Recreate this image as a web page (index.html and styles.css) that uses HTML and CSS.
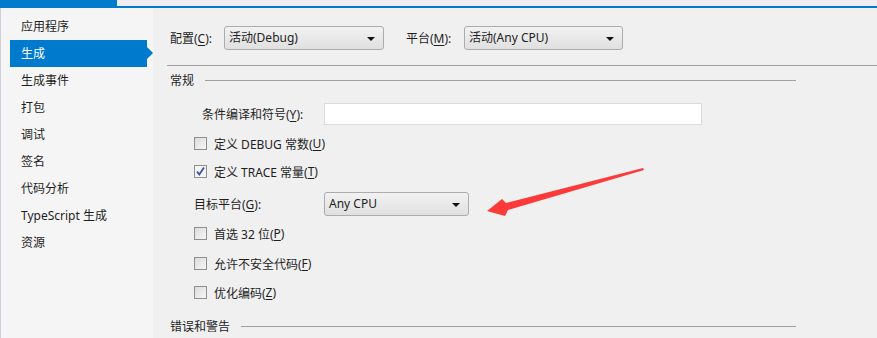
FILE: index.html
```html
<html>
    <head>
    <title>生成</title>
    <link rel="stylesheet" href="styles.css">
    </head>

    <body>
        <!-- 顶部标签栏 -->
        <div class="tabstrip"><div class="tab"></div></div>

        <div class="frame">
            <!-- 左侧导航 -->
            <ul class="nav">
                <li>应用程序</li>
                <li class="current">生成</li>
                <li>生成事件</li>
                <li>打包</li>
                <li>调试</li>
                <li>签名</li>
                <li>代码分析</li>
                <li>TypeScript 生成</li>
                <li>资源</li>
            </ul>

            <!-- 右侧属性页 -->
            <div class="page">
                <div class="toprow">
                    <label class="lbl-cfg">配置(<u>C</u>):</label>
                    <div class="combo combo-cfg">活动(Debug)<i class="drop"></i></div>
                    <label class="lbl-plat">平台(<u>M</u>):</label>
                    <div class="combo combo-plat">活动(Any CPU)<i class="drop"></i></div>
                </div>
                <div class="rule"></div>

                <div class="section sec-general"><span>常规</span><i></i></div>

                <div class="row row-symbols">
                    <label class="lbl-symbols">条件编译和符号(<u>Y</u>):</label>
                    <div class="textbox"></div>
                </div>

                <div class="check ck-debug"><span class="box"></span>定义 DEBUG 常数(<u>U</u>)</div>
                <div class="check ck-trace"><span class="box checked">
                    <svg width="11" height="11" viewBox="0 0 11 11"><path d="M2 5.5 L4.3 8.5 L9 1.5" fill="none" stroke="#3c4fa8" stroke-width="1.8"/></svg>
                </span>定义 TRACE 常量(<u>T</u>)</div>

                <div class="row row-target">
                    <label class="lbl-target">目标平台(<u>G</u>):</label>
                    <div class="combo combo-target">Any CPU<i class="drop"></i></div>
                </div>

                <div class="check ck-32"><span class="box"></span>首选 32 位(<u>P</u>)</div>
                <div class="check ck-unsafe"><span class="box"></span>允许不安全代码(<u>F</u>)</div>
                <div class="check ck-opt"><span class="box"></span>优化编码(<u>Z</u>)</div>

                <div class="section sec-errors"><span>错误和警告</span><i></i></div>
            </div>
        </div>

        <!-- 标注箭头 -->
        <svg class="arrow" width="170" height="60" viewBox="0 0 170 60">
            <polygon points="7,51 22,39 26,43 163,8 164,10 28,50 25,56" fill="#fd3a3a"/>
        </svg>
    </body>
</html>
```

FILE: styles.css
```css
*{
    padding:0;
    margin:0;
    list-style: none;
}

body{
    width:877px;
    height:338px;
    overflow:hidden;
    position:relative;
    background-color:#f0f0f0;
    font:400 12px "Noto Sans", "Noto Sans CJK SC", sans-serif;
    color:#1e1e1e;
}

u{
    text-decoration: underline;
    text-underline-offset: 2px;
}

/*顶部标签栏*/
.tabstrip{
    height:6px;
    background-color:#eeeef2;
    border-bottom:2px solid #007acc;
}

.tab{
    width:117px;
    height:6px;
    background-color:#007acc;
}

.frame{
    display:flex;
    height:330px;
}

/*左侧导航*/
.nav{
    width:152px;
    background-color:#f5f5f5;
    border-left:1px solid #ccceDB;
    padding-top:5px;
}

.nav li{
    height:27px;
    line-height:27px;
    margin-left:9px;
    width:126px;
    padding-left:11px;
    position:relative;
}

.nav li.current{
    background-color:#007acc;
    color:#fff;
}

.nav li.current:after{
    content:"";
    position:absolute;
    right:-6px;
    top:7px;
    border-left:6px solid #007acc;
    border-top:6.5px solid transparent;
    border-bottom:6.5px solid transparent;
}

/*属性页*/
.page{
    flex:1;
    padding:18px 0 0 17px;
}

.toprow{
    display:flex;
    align-items:center;
    height:24px;
}

.lbl-cfg{
    width:54px;
}

.lbl-plat{
    width:58px;
    margin-left:22px;
}

.combo{
    height:22px;
    line-height:22px;
    border:1px solid #acacac;
    border-radius:3px;
    background:linear-gradient(#f2f2f2, #e0e0e0);
    padding-left:4px;
    position:relative;
    box-sizing:content-box;
}

.combo .drop{
    position:absolute;
    right:8px;
    top:10px;
    border-top:4px solid #111;
    border-left:4px solid transparent;
    border-right:4px solid transparent;
}

.combo-cfg{
    width:154px;
}

.combo-plat{
    width:153px;
}

.combo-target{
    width:139px;
}

.rule{
    margin:15px 0 0 -3px;
    height:1px;
    background-color:#a0a0a0;
}

/*分组标题*/
.section{
    display:flex;
    align-items:center;
    height:16px;
    margin-right:81px;
}

.section i{
    flex:1;
    height:1px;
    background-color:#a0a0a0;
    margin-left:11px;
}

.sec-general{
    margin-top:6px;
}

.sec-errors{
    margin-top:19px;
}

.row{
    display:flex;
    align-items:center;
}

.row-symbols{
    margin-top:15px;
    height:22px;
}

.lbl-symbols{
    width:122px;
    padding-left:32px;
}

.textbox{
    width:376px;
    height:20px;
    background-color:#fff;
    border:1px solid #dcdcdc;
}

.row-target{
    margin-top:14px;
    height:24px;
}

.lbl-target{
    width:130px;
    padding-left:24px;
}

/*复选框*/
.check{
    display:flex;
    align-items:center;
    height:13px;
    padding-left:24px;
}

.check .box{
    width:11px;
    height:11px;
    border:1px solid #8e8f8f;
    background:linear-gradient(135deg, #dcdcdc, #f6f6f6);
    margin-right:7px;
    display:flex;
    align-items:center;
    justify-content:center;
}

.check .box.checked{
    background:#f4f4f4;
}

.ck-debug{
    margin-top:12px;
}

.ck-trace{
    margin-top:15px;
}

.ck-32{
    margin-top:11px;
}

.ck-unsafe{
    margin-top:17px;
}

.ck-opt{
    margin-top:16px;
}

/*红色箭头*/
.arrow{
    position:absolute;
    left:480px;
    top:160px;
}
```
